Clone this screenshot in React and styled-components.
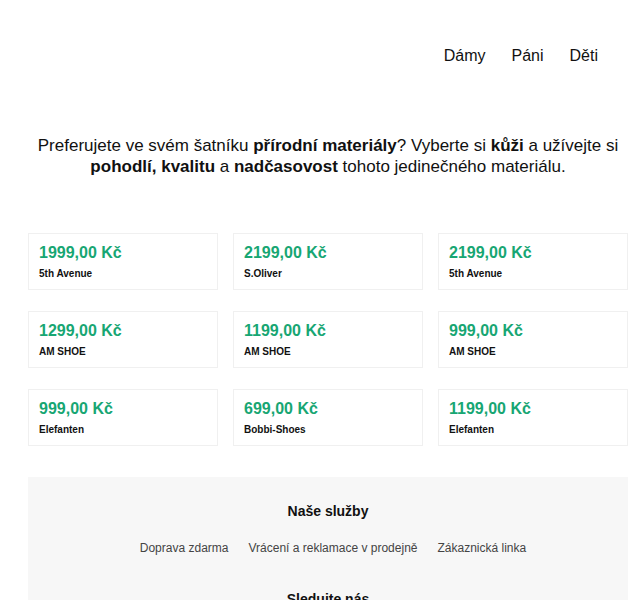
import React from 'react'
import styled, { createGlobalStyle } from 'styled-components'

const products = [
    { price: '1999,00 Kč', brand: '5th Avenue' },
    { price: '2199,00 Kč', brand: 'S.Oliver' },
    { price: '2199,00 Kč', brand: '5th Avenue' },
    { price: '1299,00 Kč', brand: 'AM SHOE' },
    { price: '1199,00 Kč', brand: 'AM SHOE' },
    { price: '999,00 Kč', brand: 'AM SHOE' },
    { price: '999,00 Kč', brand: 'Elefanten' },
    { price: '699,00 Kč', brand: 'Bobbi-Shoes' },
    { price: '1199,00 Kč', brand: 'Elefanten' },
]

const services = ['Doprava zdarma', 'Vrácení a reklamace v prodejně', 'Zákaznická linka']

const App = () => {
    return (
        <Page>
            <GlobalStyle />
            <Header>
                <Nav>
                    <NavLink>Dámy</NavLink>
                    <NavLink>Páni</NavLink>
                    <NavLink>Děti</NavLink>
                </Nav>
            </Header>
            <Intro>
                Preferujete ve svém šatníku <b>přírodní materiály</b>? Vyberte si <b>kůži</b> a užívejte si{' '}
                <b>pohodlí, kvalitu</b> a <b>nadčasovost</b> tohoto jedinečného materiálu.
            </Intro>
            <Grid>
                {products.map((p, i) => (
                    <Card key={i}>
                        <Price>{p.price}</Price>
                        <Brand>{p.brand}</Brand>
                    </Card>
                ))}
            </Grid>
            <Footer>
                <FooterTitle>Naše služby</FooterTitle>
                <FooterLinks>
                    {services.map(s => (
                        <FooterLink key={s}>{s}</FooterLink>
                    ))}
                </FooterLinks>
                <FooterTitle>Sledujte nás</FooterTitle>
            </Footer>
        </Page>
    )
}

const GlobalStyle = createGlobalStyle`
  body {
    margin: 0;
    background: #fff;
    font-family: "Liberation Sans", Arial, sans-serif;
    color: #111;
  }
`

const Page = styled.div`
  width: 600px;
  margin-left: 28px;
  height: 600px;
  overflow: hidden;
`

const Header = styled.header`
  display: flex;
  justify-content: flex-end;
  padding-top: 47px;
  height: 84px;
  box-sizing: border-box;
`

const Nav = styled.nav`
  display: flex;
  gap: 26px;
  margin-right: 30px;
`

const NavLink = styled.a`
  font-size: 16px;
  color: #111;
  cursor: pointer;
`

const Intro = styled.p`
  margin: 51px 0 0;
  text-align: center;
  font-size: 17px;
  line-height: 21px;
  color: #111;
  b {
    font-weight: bold;
  }
`

const Grid = styled.div`
  display: grid;
  grid-template-columns: repeat(3, 1fr);
  column-gap: 15px;
  row-gap: 21px;
  margin-top: 56px;
`

const Card = styled.div`
  border: 1px solid #f0f0f0;
  height: 57px;
  box-sizing: border-box;
  padding: 10px 10px 8px;
`

const Price = styled.div`
  font-size: 16px;
  font-weight: bold;
  color: #17a673;
`

const Brand = styled.div`
  margin-top: 6px;
  font-size: 10px;
  font-weight: bold;
  color: #111;
`

const Footer = styled.footer`
  margin-top: 31px;
  background: #f7f7f7;
  padding: 26px 0 30px 10px;
  text-align: center;
`

const FooterTitle = styled.div`
  font-size: 14px;
  font-weight: bold;
  color: #111;
  margin-left: -10px;
`

const FooterLinks = styled.div`
  display: flex;
  justify-content: center;
  gap: 20px;
  margin-top: 22px;
  margin-bottom: 36px;
`

const FooterLink = styled.a`
  font-size: 12px;
  color: #444;
  cursor: pointer;
`

export default App;
